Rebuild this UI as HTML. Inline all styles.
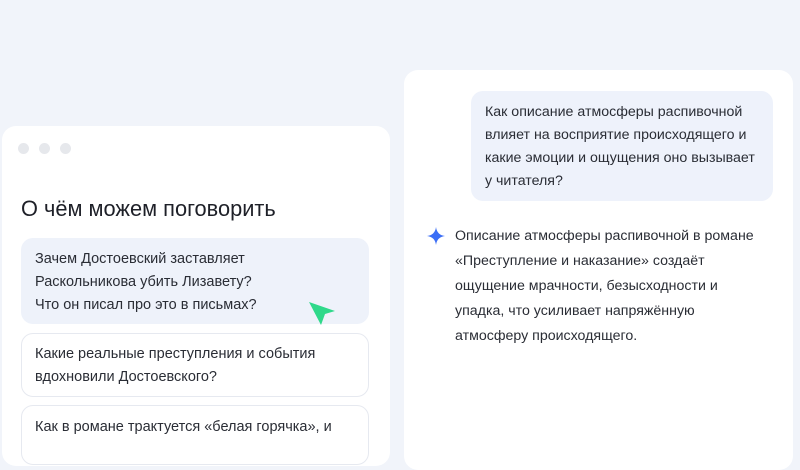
<!DOCTYPE html>
<html><head><meta charset="utf-8"><style>
body{margin:0;width:800px;height:450px;overflow:hidden;background:#f1f4fa;font-family:"Liberation Sans","Noto Sans CJK SC",sans-serif;color:#23262e;position:relative}
.card{position:absolute;background:#fff;border-radius:14px}
.dot{position:absolute;top:143px;width:11px;height:11px;border-radius:50%;background:#e6e8ec}
.t{position:absolute;font-size:14.2px;line-height:23px;color:#2a2d35}
.item{position:absolute;left:21px;width:348px;border-radius:12px;box-sizing:border-box}
</style></head><body>
<div class="card" style="left:2px;top:126px;width:388px;height:340px"></div>
<div class="dot" style="left:18px"></div><div class="dot" style="left:39px"></div><div class="dot" style="left:60px"></div>
<div class="t" style="left:21px;top:195px;font-size:21.8px;line-height:28px;color:#1e2028">О чём можем поговорить</div>
<div class="item" style="top:238px;height:86px;background:#eef2fa"></div>
<div class="t" style="left:35px;top:248px;font-size:14.5px">Зачем Достоевский заставляет<br>Раскольникова убить Лизавету?<br>Что он писал про это в письмах?</div>
<svg style="position:absolute;left:306px;top:300px" width="32" height="28" viewBox="0 0 32 28"><path d="M3 2 L29 11 L19 14 L15 25 Z" fill="#2fd98a"/></svg>
<div class="item" style="top:333px;height:64px;border:1px solid #e6e9f0;background:#fff"></div>
<div class="t" style="left:35px;top:343px;font-size:14.5px">Какие реальные преступления и события<br>вдохновили Достоевского?</div>
<div class="item" style="top:405px;height:60px;border:1px solid #e6e9f0;background:#fff"></div>
<div class="t" style="left:35px;top:416px;font-size:14.5px">Как в романе трактуется «белая горячка», и</div>
<div class="card" style="left:404px;top:70px;width:389px;height:400px"></div>
<div style="position:absolute;left:471px;top:91px;width:302px;height:110px;background:#eef2fb;border-radius:12px"></div>
<div class="t" style="left:485px;top:101px">Как описание атмосферы распивочной<br>влияет на восприятие происходящего и<br>какие эмоции и ощущения оно вызывает<br>у читателя?</div>
<svg style="position:absolute;left:427px;top:227px" width="18" height="18" viewBox="0 0 18 18"><path d="M9 0 Q10 8 18 9 Q10 10 9 18 Q8 10 0 9 Q8 8 9 0Z" fill="#3b6ef6"/></svg>
<div class="t" style="left:455px;top:224px;line-height:25px">Описание атмосферы распивочной в романе<br>«Преступление и наказание» создаёт<br>ощущение мрачности, безысходности и<br>упадка, что усиливает напряжённую<br>атмосферу происходящего.</div>
</body></html>
